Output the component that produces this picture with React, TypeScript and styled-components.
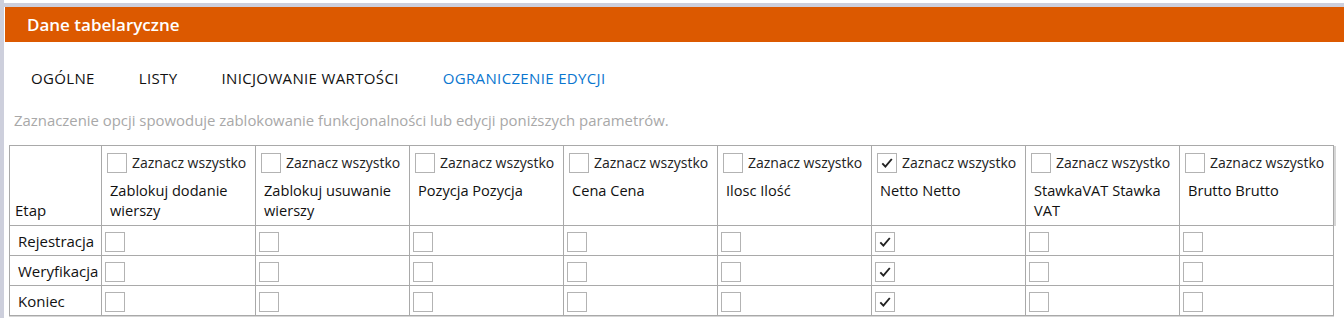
import { createGlobalStyle, styled } from "styled-components";

const GlobalStyle = createGlobalStyle`
  html, body {
    margin: 0;
    padding: 0;
    background: #ffffff;
  }
  body {
    font-family: "Open Sans", "Noto Sans", sans-serif;
    color: #000;
  }
`;

const Page = styled.div`
  display: flex;
  width: 1344px;
  height: 318px;
  overflow: hidden;
  background: #fff;
`;

const SideStrip = styled.div`
  width: 4px;
  flex: none;
  background: #cdcfdc;
`;

const Panel = styled.div`
  flex: 1;
  display: flex;
  flex-direction: column;
  padding-top: 3px;
  min-width: 0;
`;

const TopStrip = styled.div`
  height: 4px;
  background: #cdcfdc;
`;

const TitleBar = styled.div`
  height: 35px;
  margin-left: 1px;
  display: flex;
  align-items: center;
  padding-left: 22px;
  background: #dc5900;
  color: #fff;
  font-size: 17px;
  font-weight: 600;
`;

const Tabs = styled.div`
  display: flex;
  padding: 26px 0 0 5px;
  height: 20px;
`;

const Tab = styled.div<{ $active?: boolean }>`
  padding: 0 22px;
  font-size: 15px;
  line-height: 20px;
  letter-spacing: 0.35px;
  color: ${(p) => (p.$active ? "#0a76cf" : "#111")};
`;

const Hint = styled.div`
  margin: 22px 0 0 10px;
  font-size: 14.9px;
  line-height: 20px;
  color: #a8a8a8;
`;

const TableWrap = styled.div`
  margin: 15px 0 0 5px;
`;

const Grid = styled.table`
  width: 1325px;
  border-collapse: collapse;
  table-layout: fixed;
  font-size: 15px;
  box-shadow: 0 1px 0 #d6d6d6;
`;

const HeadCell = styled.th`
  height: 79px;
  padding: 0;
  border: 1px solid #a9a9a9;
  text-align: left;
  vertical-align: top;
  font-weight: 400;
  &:last-child {
    box-shadow: 2px 0 0 #d6d6d6;
  }
`;

const StageHead = styled.th`
  padding: 0 0 5px 5px;
  border: 1px solid #a9a9a9;
  text-align: left;
  vertical-align: bottom;
  font-weight: 400;
  color: #111;
`;

const SelectAll = styled.label`
  display: flex;
  align-items: center;
  gap: 5px;
  padding: 7px 0 0 5px;
  font-size: 14px;
  line-height: 20px;
  color: #222;
  white-space: nowrap;
`;

const ColumnTitle = styled.div`
  padding: 7px 8px 0 8px;
  font-size: 14.6px;
  line-height: 20px;
  color: #111;
`;

const StageCell = styled.td`
  height: 29px;
  padding: 0 0 0 8px;
  border: 1px solid #a9a9a9;
  white-space: nowrap;
  color: #111;
`;

const ValueCell = styled.td`
  padding: 2px 0 0 3px;
  border: 1px solid #a9a9a9;
  vertical-align: middle;
`;

const Box = styled.span`
  display: inline-flex;
  align-items: center;
  justify-content: center;
  width: 18px;
  height: 18px;
  border: 1px solid #b3b3b3;
  background: #fff;
  flex: none;
  vertical-align: middle;
`;

function Check({ checked }: { checked?: boolean }) {
  return (
    <Box>
      {checked && (
        <svg width="14" height="14" viewBox="0 0 14 14">
          <path d="M2.3 7.3 L5.4 10.6 L11.8 3" fill="none" stroke="#222" strokeWidth="1.9" />
        </svg>
      )}
    </Box>
  );
}

const columns = [
  { title: "Zablokuj dodanie wierszy", on: false },
  { title: "Zablokuj usuwanie wierszy", on: false },
  { title: "Pozycja Pozycja", on: false },
  { title: "Cena Cena", on: false },
  { title: "Ilosc Ilość", on: false },
  { title: "Netto Netto", on: true },
  { title: "StawkaVAT Stawka VAT", on: false },
  { title: "Brutto Brutto", on: false },
];

const stages = ["Rejestracja", "Weryfikacja", "Koniec"];

function App() {
  return (
    <>
      <GlobalStyle />
      <Page>
        <SideStrip />
        <Panel>
          <TopStrip />
          <TitleBar>Dane tabelaryczne</TitleBar>
          <Tabs>
            <Tab>OGÓLNE</Tab>
            <Tab>LISTY</Tab>
            <Tab>INICJOWANIE WARTOŚCI</Tab>
            <Tab $active>OGRANICZENIE EDYCJI</Tab>
          </Tabs>
          <Hint>Zaznaczenie opcji spowoduje zablokowanie funkcjonalności lub edycji poniższych parametrów.</Hint>
          <TableWrap>
            <Grid>
              <colgroup>
                <col style={{ width: 92 }} />
                {columns.map((c) => (
                  <col key={c.title} style={{ width: 154 }} />
                ))}
              </colgroup>
              <thead>
                <tr>
                  <StageHead>Etap</StageHead>
                  {columns.map((c) => (
                    <HeadCell key={c.title}>
                      <SelectAll>
                        <Check checked={c.on} />
                        Zaznacz wszystko
                      </SelectAll>
                      <ColumnTitle>{c.title}</ColumnTitle>
                    </HeadCell>
                  ))}
                </tr>
              </thead>
              <tbody>
                {stages.map((s) => (
                  <tr key={s}>
                    <StageCell>{s}</StageCell>
                    {columns.map((c) => (
                      <ValueCell key={c.title}>
                        <Check checked={c.on} />
                      </ValueCell>
                    ))}
                  </tr>
                ))}
              </tbody>
            </Grid>
          </TableWrap>
        </Panel>
      </Page>
    </>
  );
}

export default App;
